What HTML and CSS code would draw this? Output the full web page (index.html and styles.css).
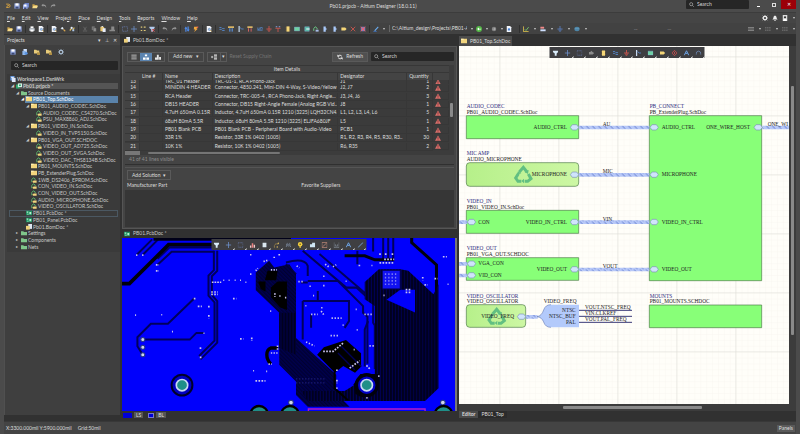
FILE: index.html
```html
<!DOCTYPE html>
<html lang="en">
<head>
    <meta charset="UTF-8">
    <meta name="viewport" content="width=device-width, initial-scale=1.0">
    <title>Pb01.prjpcb - Altium Designer (18.0.11)</title>
    <link rel="stylesheet" href="styles.css">
</head>
<body>
    <!-- icon sprite, every symbol on a 16x16 grid -->
    <svg class="sprite" aria-hidden="true">
        <symbol id="logo" viewBox="0 0 16 16"><path d="M3 3h6a4 4 0 0 1 0 9H4l3-5h4" fill="none" stroke="#d9a441" stroke-width="2.4"/></symbol>
        <symbol id="save" viewBox="0 0 16 16"><path d="M1 1h14v14H1z" fill="#8fa3dc"/><path d="M4 1h8v6H4z" fill="#fff"/><path d="M4 10h8v5H4z" fill="#3d4a75"/></symbol>
        <symbol id="saveall" viewBox="0 0 16 16"><path d="M4 0h12v12H4z" fill="#6d83c8"/><path d="M0 4h12v12H0z" fill="#9db0ea"/><path d="M3 4h6v5H3z" fill="#fff"/><path d="M3 12h6v4H3z" fill="#3d4a75"/></symbol>
        <symbol id="open" viewBox="0 0 16 16"><path d="M1 14V3h5l2 2h6v3" fill="#c9a24b"/><path d="M4 7h12l-3 7H1z" fill="#f6dc8c"/></symbol>
        <symbol id="undo" viewBox="0 0 16 16"><path d="M6 2 1 6l5 4V7q6 0 8 6 0-9-8-9z" fill="#999"/></symbol>
        <symbol id="redo" viewBox="0 0 16 16"><path d="m10 2 5 4-5 4V7q-6 0-8 6 0-9 8-9z" fill="#999"/></symbol>
        <symbol id="print" viewBox="0 0 16 16"><path d="M4 1h8v5H4z" fill="#fff"/><path d="M1 6h14v7H1z" fill="#c4cbd4"/><path d="M4 10h8v5H4z" fill="#fff"/></symbol>
        <symbol id="preview" viewBox="0 0 16 16"><path d="M2 0h9l3 3v13H2z" fill="#f3f5fa"/><circle cx="9" cy="9" r="3" fill="#9cc4ee" stroke="#35568a"/><path d="m11 11 4 4" stroke="#c99b3c" stroke-width="2"/></symbol>
        <symbol id="zoom" viewBox="0 0 16 16"><path d="m8 8 6 6" stroke="#d8a64e" stroke-width="3"/><circle cx="6" cy="6" r="4" fill="#e8f1fb" stroke="#222" stroke-width="1.5"/></symbol>
        <symbol id="zoomsel" viewBox="0 0 16 16"><path d="m2 12 4-4m4 4 4-8" stroke="#e0c064" stroke-width="3"/><circle cx="7" cy="5" r="3" fill="#e8f1fb"/><path d="M9 9h5v5H9z" fill="#a9c7ef"/></symbol>
        <symbol id="cut" viewBox="0 0 16 16"><path d="m4 2 6 9m2-9-6 9" stroke="#777" stroke-width="1.6"/><circle cx="5" cy="13" r="2" fill="none" stroke="#777"/><circle cx="11" cy="13" r="2" fill="none" stroke="#777"/></symbol>
        <symbol id="copy" viewBox="0 0 16 16"><path d="M2 1h8v10H2z" fill="#777"/><path d="M6 5h8v10H6z" fill="#8e8e8e" stroke="#444"/></symbol>
        <symbol id="paste" viewBox="0 0 16 16"><path d="M1 2h10v12H1z" fill="#e7c46c"/><path d="M4 0h4v3H4z" fill="#ddd"/><path d="M7 6h8v10H7z" fill="#e8eefb"/></symbol>
        <symbol id="stamp" viewBox="0 0 16 16"><path d="M6 1h8v9h2v4H1v-4h5z" fill="#8a8a8a"/></symbol>
        <symbol id="rect" viewBox="0 0 16 16"><path d="M1 2h14v12H1z" fill="none" stroke="#6d82b8" stroke-width="1.6" stroke-dasharray="3 1.4"/></symbol>
        <symbol id="plus" viewBox="0 0 16 16"><path d="M8 0v16M0 8h16" stroke="#6f93d0" stroke-width="2"/></symbol>
        <symbol id="dots" viewBox="0 0 16 16"><path d="M2 3h4M2 12h4M10 3h5M10 12h5" stroke="#ddc878" stroke-width="3"/></symbol>
        <symbol id="filter" viewBox="0 0 16 16"><path d="M1 2h14v3l-4 4v6H6V9L1 5z" fill="#d9ecfa"/></symbol>
        <symbol id="nofilter" viewBox="0 0 16 16"><path d="M1 2h14v3l-4 4v6H6V9L1 5z" fill="#b5cdf0"/><path d="m8 8 7 7m0-7-7 7" stroke="#e25252" stroke-width="2.4"/></symbol>
        <symbol id="updown" viewBox="0 0 16 16"><path d="M5 15V5M11 1v10" stroke="#4f8ef0" stroke-width="3"/><path d="m1 7 4-6 4 6zM7 9l4 6 4-6z" fill="#4f8ef0"/></symbol>
        <symbol id="bolt" viewBox="0 0 16 16"><path d="M3 2h11L9 7h4L3 16l3-7H2z" fill="#f0a73e"/><path d="M9 2h6l-3 4z" fill="#e25252"/></symbol>
        <symbol id="wire" viewBox="0 0 16 16"><path d="M1 4h5l3 3h6M1 9h5l3 3h6" fill="none" stroke="#5a93e0" stroke-width="2"/></symbol>
        <symbol id="bus" viewBox="0 0 16 16"><path d="M0 3h16" stroke="#f1c66b" stroke-width="4"/><path d="M4 6v9M8 6v9M12 6v9" stroke="#5a93e0" stroke-width="2"/></symbol>
        <symbol id="entry" viewBox="0 0 16 16"><path d="M3 0v16" stroke="#cfe3fb" stroke-width="3"/><path d="m5 4 5 4h5" fill="none" stroke="#5a93e0" stroke-width="2"/></symbol>
        <symbol id="harness" viewBox="0 0 16 16"><path d="M1 3h14" stroke="#f1c66b" stroke-width="4"/><path d="M4 6v9M11 6v9" stroke="#e06565" stroke-width="2.4"/></symbol>
        <symbol id="net" viewBox="0 0 16 16"><path d="M1 11h14" stroke="#5a93e0" stroke-width="2"/><path d="M2 4v5h4V4m3 5V4h5v5" fill="none" stroke="#5a93e0" stroke-width="1.6"/></symbol>
        <symbol id="gnd" viewBox="0 0 16 16"><path d="M8 0v8M1 8h14M4 11h8M6 14h4" stroke="#e25a50" stroke-width="2"/></symbol>
        <symbol id="gndblue" viewBox="0 0 16 16"><path d="M8 0v8M1 8h14M4 11h8M6 14h4" stroke="#5b84cc" stroke-width="2"/></symbol>
        <symbol id="vcc" viewBox="0 0 16 16"><path d="M2 2h4M10 2h4" stroke="#7fa4e4" stroke-width="3"/><path d="M1 6h14M8 6v10" stroke="#e25a50" stroke-width="2"/></symbol>
        <symbol id="part" viewBox="0 0 16 16"><path d="M4 1h8v14H4z" fill="#f5d678"/><path d="M2 4h2M2 8h2M2 12h2M12 4h2M12 8h2M12 12h2" stroke="#c6953c"/></symbol>
        <symbol id="sheet" viewBox="0 0 16 16"><path d="M1 3h14v10H1z" fill="#6fd3a3" stroke="#8fb9f0"/></symbol>
        <symbol id="sheet2" viewBox="0 0 16 16"><path d="M2 2h12v12H2z" fill="#56b9a0" stroke="#8fb9f0"/><path d="M6 8h9" stroke="#eaf3ff" stroke-width="3"/></symbol>
        <symbol id="reuse" viewBox="0 0 16 16"><path d="M2 13V7l4-5 5 4v3" fill="none" stroke="#6fd38c" stroke-width="2.4"/><path d="M7 10h8v5H7z" fill="#a6bbe6"/></symbol>
        <symbol id="hport" viewBox="0 0 16 16"><path d="M4 1h6v5l4 2-4 2v5H4z" fill="#a9c9fa"/></symbol>
        <symbol id="port" viewBox="0 0 16 16"><path d="M1 4h10l4 4-4 4H1z" fill="#f5d678"/></symbol>
        <symbol id="x" viewBox="0 0 16 16"><path d="m2 2 12 12m0-12L2 14" stroke="#e25a50" stroke-width="2"/></symbol>
        <symbol id="xbox" viewBox="0 0 16 16"><path d="M2 2h12v12H2z" fill="#8a7cb4"/><path d="m2 2 12 12m0-12L2 14" stroke="#f05c6a" stroke-width="2.4"/></symbol>
        <symbol id="pencil" viewBox="0 0 16 16"><path d="M3 12 13 1l2 2L6 13z" fill="#6cb0f5"/><path d="M1 15h9" stroke="#3e78d0" stroke-width="2"/></symbol>
        <symbol id="go" viewBox="0 0 16 16"><circle cx="8" cy="8" r="8" fill="#55b848"/><path d="m3 8 5-4v3h5v2H8v3z" fill="#fff"/></symbol>
        <symbol id="nogo" viewBox="0 0 16 16"><circle cx="8" cy="8" r="6" fill="#808080"/><path d="m13 8-5-4v3H4v2h4v3z" fill="#aaa"/></symbol>
        <symbol id="home" viewBox="0 0 16 16"><path d="M2 0h9l3 3v13H2z" fill="#f3f5fa"/><path d="M5 12V7l3-2 3 2v5z" fill="#4d86d8"/></symbol>
        <symbol id="draw" viewBox="0 0 16 16"><path d="M1 1v14h14" fill="none" stroke="#e0c24d" stroke-width="2.4"/><path d="m5 9 3 3 7-9" fill="none" stroke="#7bc96b" stroke-width="2.4"/></symbol>
        <symbol id="align" viewBox="0 0 16 16"><path d="M1 2h10v5H1z" fill="#e88"/><path d="M1 9h14v5H1z" fill="#cfe0ff"/></symbol>
        <symbol id="blob" viewBox="0 0 16 16"><ellipse cx="8" cy="8" rx="7" ry="6" fill="#4d86a8"/><path d="M2 7h12" stroke="#7fb4d4"/></symbol>
        <symbol id="lines" viewBox="0 0 16 16"><path d="M0 4h16M0 8h16M0 12h16" stroke="#aaa" stroke-width="1.6"/></symbol>
        <symbol id="dashes" viewBox="0 0 16 16"><path d="M0 4h16M0 8h16M0 12h16" stroke="#888" stroke-width="1.4" stroke-dasharray="4 1.5"/></symbol>
        <symbol id="gear" viewBox="0 0 16 16"><circle cx="8" cy="8" r="4.5" fill="none" stroke="currentColor" stroke-width="3"/><path d="M8 0v3M8 13v3M0 8h3M13 8h3M2 2l3 3M11 11l3 3M14 2l-3 3M2 14l3-3" stroke="currentColor" stroke-width="2"/></symbol>
        <symbol id="bell" viewBox="0 0 16 16"><path d="M1 12q3-2 3-6 0-4 4-5 4 1 4 5 0 4 3 6zM6 13h4v2H6z" fill="#eee"/></symbol>
        <symbol id="user" viewBox="0 0 16 16"><path d="M2 0h12v16H2z" fill="#ddd"/><circle cx="8" cy="6" r="3" fill="#333"/><path d="M3 16q0-6 5-6t5 6z" fill="#fff"/></symbol>
        <symbol id="search" viewBox="0 0 16 16"><circle cx="7" cy="7" r="5" fill="none" stroke="#ccc" stroke-width="1.8"/><path d="m11 11 4 4" stroke="#ccc" stroke-width="2"/></symbol>
        <symbol id="compile" viewBox="0 0 16 16"><path d="M4 0h9v12H4z" fill="#cfe0fb"/><path d="M1 5h9v11H1z" fill="#8db6ea"/><circle cx="11" cy="11" r="4" fill="#5a93e0"/></symbol>
        <symbol id="folder" viewBox="0 0 16 16"><path d="M0 3h6l2 2h8v9H0z" fill="#7fc68a"/></symbol>
        <symbol id="folderadd" viewBox="0 0 16 16"><path d="M0 2h6l2 2h6v8H0z" fill="#e8cc7a"/><path d="M8 9h8v7H8z" fill="#b08f45"/></symbol>
        <symbol id="sch" viewBox="0 0 16 16"><path d="M0 2h16v12H0z" fill="#f3d67e"/><path d="M0 2h7v3H0z" fill="#fff1b8"/></symbol>
        <symbol id="device" viewBox="0 0 16 16"><path d="M2 14V7l4-5 5 3v3" fill="none" stroke="#5cb56b" stroke-width="2.4"/><path d="M7 9h8v6H5v-4z" fill="#f3d67e"/></symbol>
        <symbol id="pcb" viewBox="0 0 16 16"><path d="M0 2h16v12H0z" fill="#1f8f60"/><path d="M2 4h4v3H2zM9 5h5v6H9zM3 10h4v2H3z" fill="#b8f0cf"/></symbol>
        <symbol id="bom" viewBox="0 0 16 16"><path d="M6 0h10v13H6z" fill="#dfe6f2"/><path d="M0 5h10v10H0z" fill="#f0d27a"/></symbol>
        <symbol id="wrk" viewBox="0 0 16 16"><path d="M1 0h11v12H1z" fill="#6a9be0"/><path d="M5 5h10v11H5z" fill="#dde8fb"/><path d="M3 3h7v2H3z" fill="#fff"/></symbol>
        <symbol id="prj" viewBox="0 0 16 16"><path d="M0 4h9v11H0z" fill="#2fa56f"/><path d="M5 1h11v10H5z" fill="#d5f2e3"/><path d="M8 4h5v4H8z" fill="#2fa56f"/></symbol>
        <symbol id="list" viewBox="0 0 16 16"><path d="M1 3h14M1 8h14M1 13h14" stroke="#bbb" stroke-width="2.6"/></symbol>
        <symbol id="blocks" viewBox="0 0 16 16"><path d="M5 1h6v5H5zM0 9h7v6H0zM9 9h7v6H9z" fill="#fff"/></symbol>
        <symbol id="hist" viewBox="0 0 16 16"><path d="M0 9h5v6H0zM5 2h5v13H5zM11 8h5v7h-5z" fill="#e6e6e6"/></symbol>
        <symbol id="addlist" viewBox="0 0 16 16"><path d="M0 8h6M3 5v6" stroke="#ddd" stroke-width="2"/><path d="M8 3h8M8 8h8M8 13h8" stroke="#ddd" stroke-width="3"/></symbol>
        <symbol id="refresh" viewBox="0 0 16 16"><path d="M13 6Q8 0 3 5M3 10q5 6 10 1" fill="none" stroke="#eee" stroke-width="2.4"/><path d="M1 1v6h6zM15 15V9H9z" fill="#eee"/></symbol>
        <symbol id="warn" viewBox="0 0 16 16"><path d="m8 1 8 14H0z" fill="#d9706c"/><path d="M8 6v4M8 12v2" stroke="#5a1f1f" stroke-width="2"/></symbol>
        <symbol id="chart" viewBox="0 0 16 16"><path d="M1 9h4v6H1zM11 7h4v8h-4z" fill="#eec9c9"/><path d="M6 3h4v12H6z" fill="#e98080"/></symbol>
        <symbol id="chip" viewBox="0 0 16 16"><path d="M3 2h10v12H3z" fill="#dbe7f0"/><path d="M1 4h2M1 8h2M1 12h2M13 4h2M13 8h2M13 12h2" stroke="#9ab"/></symbol>
        <symbol id="route" viewBox="0 0 16 16"><path d="M2 15V9l4-4h8" fill="none" stroke="#cfa94c" stroke-width="2" stroke-dasharray="4 1"/><circle cx="13" cy="3" r="2" fill="#d8b75e"/><circle cx="10" cy="13" r="2" fill="#d8b75e"/></symbol>
        <symbol id="wave" viewBox="0 0 16 16"><path d="M0 12h3V5q2-3 3 0v5q2 3 3 0V5q2-3 3 0v7h3" fill="none" stroke="#8a9bb4" stroke-width="1.6"/></symbol>
        <symbol id="via" viewBox="0 0 16 16"><circle cx="7" cy="6" r="6" fill="#f2cf3f"/><circle cx="7" cy="6" r="2" fill="#6b5518"/><path d="M7 10v6" stroke="#f2cf3f" stroke-width="3"/></symbol>
        <symbol id="poly" viewBox="0 0 16 16"><path d="M1 14V6h6V2h8v12z" fill="#cfe6f5"/></symbol>
        <symbol id="keepout" viewBox="0 0 16 16"><path d="M1 1h14v14H1zM3 13 13 3" fill="none" stroke="#c58d7c" stroke-width="2"/></symbol>
        <symbol id="dim" viewBox="0 0 16 16"><path d="M1 1v14h14V1M5 6v5h6V6" fill="none" stroke="#8b97a5" stroke-width="1.6"/></symbol>
        <symbol id="line" viewBox="0 0 16 16"><path d="M1 15 15 1" stroke="#7ba7dc" stroke-width="2.4"/></symbol>
        <symbol id="arc" viewBox="0 0 16 16"><path d="M1 13Q1 3 8 3t7 10" fill="none" stroke="#7493c4" stroke-width="2"/></symbol>
        <symbol id="tag" viewBox="0 0 16 16"><path d="M1 5h4l2-3 4 3 4 3-4 4H1z" fill="#8c8c8c"/></symbol>
        <symbol id="info" viewBox="0 0 16 16"><path d="m8 1 7 7-7 7-7-7z" fill="none" stroke="#d95050" stroke-width="2"/><path d="M8 5v6" stroke="#d95050" stroke-width="2"/></symbol>
        <symbol id="letter" viewBox="0 0 16 16"><path d="M2 14 8 2l6 12M5 9h6" fill="none" stroke="#6fa6e6" stroke-width="2.6"/></symbol>
    </svg>

    <div class="app">
        <header class="titlebar">
            <div class="quick" data-icons="logo save saveall open undo redo"></div>
            <h1>Pb01.prjpcb - Altium Designer (18.0.11)</h1>
            <div class="window-tools">
                <label class="search"><svg><use href="#search"/></svg><input type="text" placeholder="Search" aria-label="Search everywhere"></label>
                <button class="win" aria-label="Minimize"><span class="minimize"></span></button>
                <button class="win" aria-label="Maximize"><span class="maximize"></span></button>
                <button class="win close" aria-label="Close">✕</button>
            </div>
        </header>

        <nav class="menubar">
            <a href="#"><u>F</u>ile</a>
            <a href="#"><u>E</u>dit</a>
            <a href="#"><u>V</u>iew</a>
            <a href="#">Proje<u>c</u>t</a>
            <a href="#"><u>P</u>lace</a>
            <a href="#"><u>D</u>esign</a>
            <a href="#"><u>T</u>ools</a>
            <a href="#"><u>R</u>eports</a>
            <a href="#"><u>W</u>indow</a>
            <a href="#"><u>H</u>elp</a>
            <div class="account" data-icons="gear bell user caret"></div>
        </nav>

        <div class="toolbar">
            <div data-icons="open save"></div>
            <div data-icons="print preview"></div>
            <div data-icons="preview zoom zoomsel"></div>
            <div data-icons="cut copy paste stamp"></div>
            <div data-icons="rect plus dots nofilter"></div>
            <div data-icons="undo redo"></div>
            <div data-icons="updown bolt"></div>
            <div data-icons="preview"></div>
            <div class="wiring" data-icons="wire bus entry harness net gnd vcc part sheet sheet2 reuse hport hport port x xbox"></div>
            <div data-icons="pencil caret"></div>
            <input class="path" type="text" value="C:\Altium_design\Projects\PB01-A" aria-label="Document path">
            <div data-icons="caret go caret nogo caret home"></div>
            <div class="drawing" data-icons="draw caret align caret gndblue caret blob caret"></div>
            <span class="more">...</span>
            <span class="more">...</span>
            <div class="line-styles" data-icons="lines caret dashes caret dashes caret"></div>
        </div>

        <main class="workspace">
            <aside class="projects">
                <div class="panel-title"><h2>Projects</h2><span>▾</span><span>⊥</span><span>✕</span></div>
                <div class="panel-body">
                    <div class="panel-tools" data-icons="save compile folderadd folderadd gear"></div>
                    <label class="search"><svg><use href="#search"/></svg><input type="text" placeholder="Search" aria-label="Search projects"></label>
                    <ul class="tree">
                        <li class="l0 strong"><svg><use href="#wrk"/></svg>Workspace1.DsnWrk</li>
                        <li class="l1 strong project"><i>◢</i><svg><use href="#prj"/></svg>Pb01.prjpcb *</li>
                        <li class="l2"><i>◢</i><svg><use href="#folder"/></svg>Source Documents</li>
                        <li class="l3 selected"><i>◢</i><svg><use href="#sch"/></svg>PB01_Top.SchDoc</li>
                        <li class="l4"><i>◢</i><svg><use href="#sch"/></svg>PB01_AUDIO_CODEC.SchDoc</li>
                        <li class="l5"><i></i><svg><use href="#device"/></svg>AUDIO_CODEC_CS4270.SchDoc</li>
                        <li class="l5"><i></i><svg><use href="#device"/></svg>PSU_MAX8860_ADJ.SchDoc</li>
                        <li class="l4"><i>◢</i><svg><use href="#sch"/></svg>PB01_VIDEO_IN.SchDoc</li>
                        <li class="l5"><i></i><svg><use href="#device"/></svg>VIDEO_IN_TVP5150.SchDoc</li>
                        <li class="l4"><i>◢</i><svg><use href="#sch"/></svg>PB01_VGA_OUT.SCHDOC</li>
                        <li class="l5"><i></i><svg><use href="#device"/></svg>VIDEO_OUT_AD725.SchDoc</li>
                        <li class="l5"><i></i><svg><use href="#device"/></svg>VIDEO_OUT_SVGA.SchDoc</li>
                        <li class="l5"><i></i><svg><use href="#device"/></svg>VIDEO_DAC_THS8134B.SchDoc</li>
                        <li class="l4"><i></i><svg><use href="#sch"/></svg>PB01_MOUNTS.SchDoc</li>
                        <li class="l4"><i></i><svg><use href="#sch"/></svg>PB_ExtenderPlug.SchDoc</li>
                        <li class="l4"><i></i><svg><use href="#device"/></svg>1WB_DS2406_EPROM.SchDoc</li>
                        <li class="l4"><i></i><svg><use href="#device"/></svg>CON_VIDEO_IN.SchDoc</li>
                        <li class="l4"><i></i><svg><use href="#device"/></svg>CON_VIDEO_OUT.SchDoc</li>
                        <li class="l4"><i></i><svg><use href="#device"/></svg>AUDIO_MICROPHONE.SchDoc</li>
                        <li class="l4"><i></i><svg><use href="#device"/></svg>VIDEO_OSCILLATOR.SchDoc</li>
                        <li class="l3 focused"><i></i><svg><use href="#pcb"/></svg>PB01.PcbDoc *</li>
                        <li class="l3"><i></i><svg><use href="#pcb"/></svg>PB01_Panel.PcbDoc</li>
                        <li class="l3"><i></i><svg><use href="#bom"/></svg>Pb01.BomDoc *</li>
                        <li class="l2"><i>▸</i><svg><use href="#folder"/></svg>Settings</li>
                        <li class="l2"><i>▸</i><svg><use href="#folder"/></svg>Components</li>
                        <li class="l2"><i>▸</i><svg><use href="#folder"/></svg>Nets</li>
                    </ul>
                </div>
            </aside>

            <div class="documents">
                <section class="bom">
                    <div class="doc-tab"><svg><use href="#bom"/></svg>Pb01.BomDoc *</div>
                    <div class="bom-body">
                        <div class="bom-tools">
                            <div class="segmented">
                                <button aria-label="Flat view"><svg><use href="#list"/></svg></button>
                                <button class="on" aria-label="Consolidated view"><svg><use href="#blocks"/></svg></button>
                                <button aria-label="Totals view"><svg><use href="#hist"/></svg></button>
                            </div>
                            <button class="btn">Add new <span>▾</span></button>
                            <div class="segmented">
                                <button aria-label="Add row"><svg><use href="#addlist"/></svg></button>
                                <button class="narrow" aria-label="More">▾</button>
                            </div>
                            <button class="plain" disabled>Reset Supply Chain</button>
                            <button class="btn refresh"><svg><use href="#refresh"/></svg>Refresh</button>
                            <label class="search"><svg><use href="#search"/></svg><input type="text" placeholder="Search" aria-label="Search items"></label>
                        </div>
                        <div class="items">
                            <table>
                                <caption>Item Details</caption>
                                <thead>
                                    <tr><th></th><th>Line #</th><th>Name</th><th>Description</th><th>Designator</th><th>Quantity</th><th></th></tr>
                                </thead>
                                <tbody>
                                    <tr><td>13</td><td></td><td>TRC_01 Header</td><td>TRC-01-1, RCA Phono-Jack</td><td>J1</td><td>1</td><td><svg><use href="#warn"/></svg></td></tr>
                                    <tr><td>14</td><td></td><td>MINIDIN 4 HEADER</td><td>Connector, 4850.241, Mini-DIN 4-Way, S-Video/Yellow</td><td>J2, J7</td><td>2</td><td><svg><use href="#warn"/></svg></td></tr>
                                    <tr><td>15</td><td></td><td>RCA Header</td><td>Connector, TRC-005-4 , RCA Phono-Jack, Right Angle...</td><td>J3, J4, J6</td><td>3</td><td><svg><use href="#warn"/></svg></td></tr>
                                    <tr><td>16</td><td></td><td>DB15 HEADER</td><td>Connector, DB15 Right-Angle Female (Analog RGB Vid..</td><td>J8</td><td>1</td><td><svg><use href="#warn"/></svg></td></tr>
                                    <tr><td>17</td><td></td><td>4.7uH 650mA 0.15R</td><td>Inductor, 4.7uH 650mA 0.15R 1210 (3225) LQH32CN4..</td><td>L1, L2, L3, L4, L6</td><td>5</td><td><svg><use href="#warn"/></svg></td></tr>
                                    <tr><td>18</td><td></td><td>68uH 80mA 5.5R</td><td>Inductor, 68uH 80mA 5.5R 1210 (3225) ELJFA680JF</td><td>L5</td><td>1</td><td><svg><use href="#warn"/></svg></td></tr>
                                    <tr><td>19</td><td></td><td>PB01 Blank PCB</td><td>PB01 Blank PCB - Peripheral Board with Audio-Video</td><td>PCB1</td><td>1</td><td><svg><use href="#warn"/></svg></td></tr>
                                    <tr><td>20</td><td></td><td>33R 1%</td><td>Resistor, 33R 1% 0402 (1005)</td><td>R1, R2, R3, R4, R5, R30, R3..</td><td>30</td><td><svg><use href="#warn"/></svg></td></tr>
                                    <tr><td>21</td><td></td><td>10K 1%</td><td>Resistor, 10K 1% 0402 (1005)</td><td>R6, R35</td><td>2</td><td><svg><use href="#warn"/></svg></td></tr>
                                </tbody>
                            </table>
                            <div class="vscroll"><span></span></div>
                        </div>
                        <div class="hscroll"><span></span></div>
                        <p class="count">41 of 41 lines visible</p>
                        <div class="solutions">
                            <button class="btn">Add Solution <span>▾</span></button>
                        </div>
                        <table class="suppliers">
                            <thead><tr><th>Manufacturer Part</th><th>Favorite Suppliers</th></tr></thead>
                        </table>
                    </div>
                </section>

                <section class="pcb">
                    <div class="doc-tab"><svg><use href="#pcb"/></svg>PB01.PcbDoc *</div>
                    <div class="canvas">
                        <div class="active-bar" data-icons="filter plus rect chart chip route wave via poly keepout dim letter line"></div>
                        <svg class="board" viewBox="6 42 999 516" preserveAspectRatio="xMinYMin slice" role="img" aria-label="Bottom copper layer">
                            <defs>
                                <pattern id="comb" width="9" height="9" patternUnits="userSpaceOnUse"><path d="M0 0h9v9H0z" fill="#00001e"/><path d="M3 0v9" stroke="#00006a" stroke-width="2"/></pattern>
                                <pattern id="slant" width="8" height="8" patternUnits="userSpaceOnUse" patternTransform="rotate(-45)"><path d="M0 0h8v8H0z" fill="#000030"/><path d="M3 0v8" stroke="#00006c" stroke-width="2"/></pattern>
                            </defs>
                            <path d="M6 42h999v519H6z" fill="#0000fc"/>
                            <g fill="none" stroke="#00005c" stroke-width="6">
                                <path d="M50 92 96 46M68 92l46-46M112 122l42-39h126M112 104l36-34h132"/>
                                <path d="M280 80v58l-16 16v60l18 20v114l-46 46M290 80v60l-16 16v56l16 18v124l-50 50"/>
                                <path d="m222 222-79 76H92l-40 40v27l14 22M68 345h140l20-20h22"/>
                                <path d="M495 120l30 30M545 80l130 110h30l50 45v60l5 8v130M560 170h90l75 75v20l13 12v140"/>
                                <path d="M545 230h138v60l-13 20M545 230v115M590 200v28M570 270v40M540 175h20M595 90l140 120M740 290l-10 25v110"/>
                                <path d="M755 42v40M785 42v65M800 42v65M815 42v65M708 80v40"/>
                                <path d="M495 115q55-15 65 10v30"/>
                            </g>
                            <path d="M6 178h22L145 62h135" fill="none" stroke="#00000e" stroke-width="11"/>
                            <path d="M100 46h410" stroke="#000018" stroke-width="9"/>
                            <path d="M870 42v14l74 66v90M670 95h60l30 12h58" fill="none" stroke="#000010" stroke-width="9"/>
                            <path d="M405 145l40-35 15 20 45-10 20 30v190l120 110v55l40 40H560l-35-35v-40l-50-50V265l-70-67z" fill="url(#slant)"/>
                            <path d="M475 265h50v125l-50-20z" fill="url(#comb)"/>
                            <path d="M412 172h22v30l-14-8zM440 140h30l-4 28h-34zM450 190l20-18h28v85l-20-8-28-30z" fill="#000"/>
                            <path d="M472 370h-22q-12 5-12 20t12 28" fill="none" stroke="#000" stroke-width="10"/>
                            <path d="M730 225v-52l42-38h64l24 5 75 70 15-30v310l-40 38H560l-20-30h130l30-18h60V245z" fill="url(#comb)"/>
                            <path d="M836 196h44v68L795 226z" fill="#0000fc"/>
                            <path d="M782 138h54v56h-54z" fill="#1212f2" stroke="#000050" stroke-width="3"/>
                            <path d="M588 390l20-22 66-22 45 40v40l-18 18-35-20-25 20z" fill="#000"/>
                            <path d="M660 365l60 60M650 385l50 50" stroke="#000058" stroke-width="4"/>
                            <path d="M697 478l20-30h55v28l-16 30q-30 22-55 0z" fill="#000010"/>
                            <path d="M640 440v50l40 36" fill="none" stroke="#000" stroke-width="6"/>
                            <path d="M525 462h90M525 474h90" stroke="#1c1c74" stroke-width="4" stroke-dasharray="4 5"/>
                            <path d="M562 560v-8h348v8" fill="none" stroke="#b41cc8" stroke-width="4"/>
                            <!-- vias -->
                            <g fill="none" stroke="#c9c4ee" stroke-width="5">
                                <path d="M48 93h4M66 93h4M107 122h9M107 140h9M274 174h28M308 168h3M324 168h3M342 168h3M358 168h3M374 174h3" stroke-dasharray="5 3"/>
                                <path d="M272 203h20M272 210h20M220 223h5M232 246h12M265 244v8M265 272v10M337 223h10M45 272h3M123 271h3M155 321h3M249 326h3M240 368v8M238 398h5M358 343h10M393 339v10M397 438h3M436 440h3M404 468h30" stroke-dasharray="5 4"/>
                                <path d="M388 92h5M388 150h5M405 140l6-8M428 112l14-4M460 98v6M475 90v6M450 137h18M462 207v10M475 215h4M492 220h4M448 260h3M450 385h20M443 418h10M470 363v14" stroke-dasharray="4 4"/>
                                <path d="M527 125l8 6M612 120l12 9M635 128l10-6M673 171h3M565 186h4M606 156h4M606 184h4M576 214h3M600 250h6M570 270h20M600 260l10 14M631 281h30M664 302h3M628 333h26M555 352l25 12M703 255h3M706 316h3M729 270h24M744 364h16M714 122v6M750 124h3M553 244h3M532 172h14" stroke-dasharray="4 5"/>
                                <path d="M773 90h6M790 90h6M810 90h6M774 116h45M788 106h30M903 158v10M938 163h10M963 98h12M852 196h18M852 204h18M908 182h10M786 213h3" stroke-dasharray="5 4"/>
                                <path d="M790 150h40M790 160h40M790 170h40M790 180h40" stroke="#7d7df4" stroke-dasharray="4 6"/>
                                <path d="M606 380h30l30-25M685 430l30-22M735 422l10 10M770 454h4M734 518h5M647 434v6M647 465v10M647 488v4M697 375h3M980 180h-3" stroke-dasharray="5 4"/>
                            </g>
                            <g fill="#cfd6ec" stroke="#273a80" stroke-width="3">
                                <circle cx="68" cy="345" r="6"/><circle cx="68" cy="368" r="6"/><circle cx="68" cy="390" r="6"/>
                                <circle cx="510" cy="533" r="7"/><circle cx="963" cy="533" r="7"/>
                            </g>
                            <!-- mounting holes -->
                            <circle cx="185" cy="481" r="31" fill="#0000c0" stroke="#00002a" stroke-width="6"/>
                            <circle cx="736" cy="481" r="31" fill="#0000c8" stroke="#00000c" stroke-width="10"/>
                            <g fill="#1f8f88" stroke="#c8d8f4" stroke-width="5">
                                <circle cx="185" cy="481" r="17"/><circle cx="736" cy="481" r="17"/>
                            </g>
                            <g fill="#1f8f88" stroke="#000" stroke-width="7">
                                <circle cx="415" cy="569" r="26"/><circle cx="507" cy="569" r="26"/><circle cx="965" cy="569" r="26"/>
                            </g>
                        </svg>
                    </div>
                    <div class="layers">
                        <span class="swatch"></span><button>LS</button>
                        <span class="swatch ring"></span><button>BL</button>
                    </div>
                </section>
            </div>

            <section class="schematic">
                <div class="doc-tab active"><svg><use href="#sch"/></svg>PB01_Top.SchDoc</div>
                <div class="sheet-row">
                    <div class="canvas">
                        <div class="active-bar" data-icons="filter plus rect tag part wire gnd entry sheet port info letter arc"></div>
                        <svg class="sheet" viewBox="0 0 990 1074" preserveAspectRatio="xMinYMin slice" role="img" aria-label="Top level schematic">
                            <defs>
                                <pattern id="minor" width="17.7" height="17.7" x="122" y="32" patternUnits="userSpaceOnUse"><path d="M0 0h18M0 0v18" stroke="#f4f3ed" stroke-width="2" fill="none"/></pattern>
                                <pattern id="major" width="177" height="177" x="121" y="31" patternUnits="userSpaceOnUse"><path d="M0 1h177M1 0v177" stroke="#dcdcd6" stroke-width="2" fill="none"/></pattern>
                                <pattern id="cable" width="18" height="12" y="238" patternUnits="userSpaceOnUse"><path d="M0 0h18v12H0z" fill="#b7c8f8"/><path d="m3 1 10 10" stroke="#5f78cc" stroke-width="3"/></pattern>
                                <linearGradient id="reused" x2="1"><stop offset="0" stop-color="#b6f08a"/><stop offset="1" stop-color="#cdf7a4"/></linearGradient>
                                <path id="pin" d="M6-8h13l6 8-6 8H6l-6-8z" fill="#cfe4fb" stroke="#7d93b8" stroke-width="2"/>
                                <g id="recycle" fill="none" stroke="#62bf82" stroke-width="9">
                                    <path d="M-12-8 0-22 11-8M15-2l8 14-10 8H4M-6 20h-10l-7-10 8-13"/>
                                    <path d="m16-14-2 12-10-6zM2 12v14l-8-7zM-20 0l4-10 10 6z" fill="#62bf82" stroke="none"/>
                                </g>
                            </defs>
                            <path d="M0 0h1200v1200H0z" fill="#fffef9"/>
                            <path d="M0 0h1200v1200H0z" fill="url(#minor)"/>
                            <path d="M0 0h1200v1200H0z" fill="url(#major)"/>
                            <g class="block">
                                <path d="M22 209h337v69H22zM22 493h337v69H22zM22 635h337v68H22zM571 209h337v495H571zM571 777h337v68H571z"/>
                                <rect class="reused" x="22" y="350" width="337" height="71" rx="10"/>
                                <rect class="reused" x="22" y="776" width="178" height="68" rx="10"/>
                            </g>
                            <g fill="url(#cable)">
                                <path d="M359 239h212v11H359zM359 381h212v11H359zM359 523h212v11H359zM359 665h212v11H359zM910 239h90v11h-90zM0 523h25v11H0zM0 648h25v11H0zM0 683h25v11H0zM200 807h36v11h-36z"/>
                            </g>
                            <path d="M234 812q14-2 20-20 5-16 22-16h84v68h-84q-17 0-22-16-6-15-20-16z" fill="#b3cafb"/>
                            <path d="M234 812q14-2 20-20 5-16 22-16M276 844q-17 0-22-16-6-15-20-16" fill="none" stroke="#6f83bb" stroke-width="2"/>
                            <path d="M360 793h159M360 811h159M360 829h159" stroke="#3a3a78" stroke-width="3"/>
                            <use href="#recycle" x="193" y="386"/>
                            <use href="#recycle" x="113" y="812"/>
                            <use href="#pin" x="334" y="244"/><use href="#pin" x="334" y="386"/><use href="#pin" x="334" y="528"/><use href="#pin" x="334" y="670"/>
                            <use href="#pin" x="25" y="528"/><use href="#pin" x="25" y="653"/><use href="#pin" x="25" y="688"/><use href="#pin" x="175" y="812"/>
                            <use href="#pin" x="573" y="244"/><use href="#pin" x="573" y="386"/><use href="#pin" x="573" y="528"/><use href="#pin" x="573" y="670"/><use href="#pin" x="885" y="244"/>
                            <g class="name">
                                <text x="23" y="187">AUDIO_CODEC</text><text x="23" y="328">MIC AMP</text><text x="23" y="470">VIDEO_IN</text>
                                <text x="23" y="612">VIDEO_OUT</text><text x="23" y="755">VIDEO_OSCILLATOR</text>
                                <text x="572" y="187">PB_CONNECT</text><text x="572" y="755">MOUNTS</text>
                            </g>
                            <g class="file">
                                <text x="23" y="205">PB01_AUDIO_CODEC.SchDoc</text><text x="23" y="346">AUDIO_MICROPHONE</text><text x="23" y="489">PB01_VIDEO_IN.SchDoc</text>
                                <text x="23" y="630">PB01_VGA_OUT.SCHDOC</text><text x="23" y="772">VIDEO_OSCILLATOR</text>
                                <text x="572" y="205">PB_ExtenderPlug.SchDoc</text><text x="572" y="772">PB01_MOUNTS.SCHDOC</text><text x="254" y="772">VIDEO_FREQ</text>
                                <text x="431" y="240">AU</text><text x="431" y="382">MIC</text><text x="431" y="524">VIN</text><text x="431" y="666">VOUT</text><text x="926" y="240">ONE_WI</text>
                                <text x="378" y="789">VOUT.NTSC_FREQ</text><text x="378" y="807">VIN.CLKREF</text><text x="378" y="825">VOUT.PAL_FREQ</text>
                                <text x="58" y="534">CON</text><text x="58" y="658">VGA_CON</text><text x="58" y="693">VID_CON</text>
                                <text x="608" y="249">AUDIO_CTRL</text><text x="608" y="391">MICROPHONE</text><text x="608" y="533">VIDEO_IN_CTRL</text><text x="608" y="675">VIDEO_OUT</text>
                            </g>
                            <g class="file end">
                                <text x="324" y="249">AUDIO_CTRL</text><text x="324" y="391">MICROPHONE</text><text x="324" y="533">VIDEO_IN_CTRL</text><text x="324" y="675">VIDEO_OUT</text>
                                <text x="165" y="817">VIDEO_FREQ</text><text x="350" y="799">NTSC</text><text x="350" y="816">NTSC_BUF</text><text x="350" y="834">PAL</text>
                                <text x="873" y="249">ONE_WIRE_HOST</text>
                            </g>
                        </svg>
                    </div>
                    <div class="vscroll"><span></span></div>
                </div>
                <div class="hscroll"><span></span></div>
                <div class="view-tabs">
                    <button class="on">Editor</button>
                    <button>PB01_Top</button>
                </div>
            </section>
        </main>

        <footer class="status">
            <span>X:3300.000mil Y:5900.000mil</span>
            <span>Grid:50mil</span>
            <button>Panels</button>
        </footer>
    </div>

    <script>
        // fill every icon strip from its data-icons list
        document.querySelectorAll('[data-icons]').forEach(strip => {
            strip.classList.add('icons');
            strip.dataset.icons.split(' ').forEach(name => {
                const button = document.createElement('button');
                button.setAttribute('aria-label', name);
                if (name === 'caret') {
                    button.className = 'caret';
                } else {
                    button.innerHTML = `<svg><use href="#${name}"/></svg>`;
                }
                strip.appendChild(button);
            });
        });
    </script>
</body>
</html>
```

FILE: styles.css
```css
* {
    box-sizing: border-box;
}
body {
    margin: 0;
    background: #4b4b4b;
    color: #dedede;
    font-family: Lato, "Open Sans", sans-serif;
    font-size: 5px;
    line-height: 7px;
}
h1, h2, p, ul {
    margin: 0;
    padding: 0;
    font-size: inherit;
    font-weight: normal;
}
button, input {
    margin: 0;
    padding: 0;
    border: none;
    background: none;
    color: inherit;
    font: inherit;
}
a {
    color: inherit;
    text-decoration: none;
}
svg {
    display: block;
    width: 6px;
    height: 6px;
    flex: none;
}
.sprite {
    position: absolute;
    width: 0;
    height: 0;
}
.app {
    display: flex;
    flex-direction: column;
    height: 100vh;
    padding: 0 4px;
}

/* icon strips */
.icons {
    display: flex;
    flex: none;
    align-items: center;
    gap: 1px;
}
.icons button {
    display: flex;
    justify-content: center;
    align-items: center;
    width: 8px;
    height: 8px;
}
.icons .caret {
    width: 5px;
}
.caret::before {
    content: "";
    border: 1px solid transparent;
    border-top: 2px solid #ccc;
    border-bottom: none;
}

/* search boxes */
.search {
    display: flex;
    align-items: center;
    gap: 3px;
    height: 9px;
    padding: 0 3px;
    background: #262626;
    border-radius: 1px;
}
.search svg {
    width: 5px;
    height: 5px;
}
.search input {
    flex: 1;
    width: 0;
}
.search input::placeholder {
    color: #d6d6d6;
}

/* title, menu and main toolbar */
.titlebar {
    display: grid;
    grid-template-columns: 1fr auto 1fr;
    align-items: center;
    height: 12px;
}
.titlebar h1 {
    margin-right: 54px;
}
.window-tools {
    display: flex;
    align-items: start;
    justify-content: flex-end;
    height: 12px;
}
.window-tools .search {
    width: 63px;
    margin-right: 2px;
}
.win {
    display: flex;
    align-items: center;
    justify-content: center;
    width: 15px;
    height: 9px;
}
.minimize {
    width: 3px;
    height: 1px;
    margin-top: 3px;
    background: #fff;
}
.maximize {
    width: 4px;
    height: 4px;
    border: 1px solid #ddd;
}
.close {
    background: #9b0008;
    color: #fff;
}
.menubar {
    display: flex;
    align-items: center;
    gap: 7px;
    height: 11px;
    padding-left: 3px;
    background: #454545;
    border-top: 1px solid #3c3c3c;
}
.account {
    margin-left: auto;
    gap: 2px;
    color: #eee;
}
.toolbar {
    display: flex;
    align-items: center;
    gap: 2px;
    height: 11px;
    padding-left: 2px;
    background: #424242;
}
.toolbar .icons + .icons {
    border-left: 1px solid #303030;
    padding-left: 2px;
}
.toolbar .wiring {
    width: 152px;
    justify-content: space-between;
    gap: 0;
}
.path {
    width: 78px;
    margin-left: 1px;
    padding-left: 2px;
    border-left: 1px solid #666;
}
.toolbar .drawing {
    margin-left: 4px;
    gap: 2px;
}
.more {
    margin-left: 44px;
    color: #999;
}
.more + .more {
    margin-left: 28px;
}
.line-styles {
    margin-left: auto;
    gap: 2px;
}

/* projects panel */
.workspace {
    display: flex;
    flex: 1;
    min-height: 0;
    background: #313131;
}
.projects {
    display: flex;
    flex-direction: column;
    width: 116px;
    margin-bottom: 6px;
}
.panel-title {
    display: flex;
    align-items: center;
    gap: 4px;
    height: 11px;
    padding: 0 3px;
    background: #464646;
    border-top: 1px solid #333;
}
.panel-title h2 {
    flex: 1;
}
.panel-body {
    flex: 1;
    padding: 2px 2px 0 4px;
    background: #3f3f3f;
    border-left: 1px solid #505050;
}
.panel-tools {
    gap: 4px;
    height: 10px;
}
.panel-tools svg {
    color: #a9bdd2;
}
.panel-body .search {
    margin: 4px 0 6px 2px;
}
.tree {
    display: grid;
    grid-auto-rows: 1fr;
    height: 174px;
    list-style: none;
    background: #3a3a3a;
    color: #c8c8c8;
    box-shadow: 0 0 0 2px #3a3a3a;
}
.tree li {
    display: flex;
    align-items: center;
    gap: 1px;
    overflow: hidden;
    line-height: 6px;
    white-space: nowrap;
}
.tree i {
    width: 4px;
    font-size: 4px;
    font-style: normal;
}
.strong {
    font-weight: bold;
}
.l0 { padding-left: 1px; }
.l1 { padding-left: 2px; }
.l2 { padding-left: 7px; }
.l3 { padding-left: 12px; }
.l4 { padding-left: 17px; }
.l5 { padding-left: 22px; }
.project {
    background: linear-gradient(90deg, #3a3a3a 10px, #555 10px);
}
.selected {
    background: linear-gradient(90deg, #3a3a3a 16px, #5a83ab 16px);
    color: #fff;
}
.focused {
    box-shadow: inset 0 0 0 1px #4b5862;
}

/* documents */
.documents {
    display: flex;
    flex-direction: column;
    flex: 1;
    min-width: 0;
    padding: 0 2px;
}
.doc-tab {
    display: flex;
    align-items: center;
    gap: 3px;
    align-self: flex-start;
    height: 12px;
    padding: 0 2px;
    color: #c8c8c8;
}
.doc-tab.active {
    height: 10px;
    margin-top: 2px;
    background: #4c4c4c;
    color: #ddd;
}
.bom {
    display: flex;
    flex-direction: column;
}
.bom-body {
    display: flex;
    flex-direction: column;
    padding: 1px 2px;
    border: 1px solid #555;
    background: #444;
}
.bom-tools {
    display: flex;
    align-items: center;
    gap: 3px;
    height: 17px;
    padding: 0 0 0 2px;
}
.segmented {
    display: flex;
    border: 1px solid #5a5a5a;
}
.segmented button {
    display: flex;
    align-items: center;
    justify-content: center;
    width: 12px;
    height: 8px;
}
.segmented .narrow {
    width: 6px;
    border-left: 1px solid #5a5a5a;
}
.segmented .on {
    background: #5b84b0;
}
.btn {
    display: flex;
    align-items: center;
    justify-content: center;
    gap: 3px;
    height: 10px;
    padding: 0 4px;
    border: 1px solid #5a5a5a;
    white-space: nowrap;
}
.plain {
    color: #757575;
}
.refresh {
    margin-left: auto;
    background: #505050;
}
.bom-tools .search {
    width: 83px;
}
.items {
    display: flex;
    background: #3b3b3b;
}
.items table {
    display: flex;
    flex-direction: column;
    flex: 1;
    min-width: 0;
}
.items caption {
    display: block;
    height: 7px;
    background: #444;
    border-top: 1px solid #373737;
    line-height: 6px;
}
.items thead, .items tbody {
    display: grid;
}
.items thead {
    height: 8px;
    background: #444;
    border-top: 1px solid #373737;
}
.items tbody {
    height: 71px;
    grid-template-rows: 4px repeat(8, 1fr);
    overflow: hidden;
}
.items tr {
    display: grid;
    grid-template-columns: 15fr 23fr 50fr 126fr 69fr 26fr 16fr;
    align-items: center;
    overflow: hidden;
}
.items tbody tr:first-child {
    align-content: end;
}
.items td, .items th {
    padding: 0 0 0 2px;
    border-right: 1px solid #373737;
    font-weight: normal;
    text-align: left;
    white-space: nowrap;
    overflow: hidden;
}
.items td {
    border-bottom: 1px solid #373737;
}
.items td:first-child {
    padding-right: 3px;
    background: #434343;
    text-align: right;
}
.items td:nth-child(6) {
    padding-right: 3px;
    text-align: right;
}
.items td:empty::before {
    content: "\00a0";
}
.vscroll {
    display: flex;
    width: 5px;
    padding: 0 1px;
    background: #3c3c3c;
}
.vscroll span {
    width: 3px;
    border-radius: 1px;
    background: #8a8a8a;
}
.items .vscroll span {
    height: 14px;
    margin-top: 38px;
}
.hscroll {
    height: 5px;
    padding: 1px 0;
    background: #3c3c3c;
}
.hscroll span {
    display: block;
    height: 2px;
    border-radius: 1px;
    background: #757575;
}
.bom .hscroll {
    height: 4px;
    border-left: 15px solid #777;
}
.bom .hscroll span {
    width: 42%;
    margin-left: 8px;
}
.count {
    height: 10px;
    padding: 1px 4px;
    color: #8d8d8d;
    border-bottom: 1px solid #303030;
}
.solutions {
    display: flex;
    align-items: center;
    height: 15px;
    margin-top: 2px;
    padding-left: 2px;
    border-top: 1px solid #555;
}
.suppliers {
    height: 45px;
    border-spacing: 0;
    background: linear-gradient(#444 8px, #363636 8px);
}
.suppliers thead {
    vertical-align: top;
}
.suppliers th {
    width: 53%;
    padding: 0 0 0 2px;
    font-weight: normal;
    text-align: left;
}
.suppliers th + th {
    width: 47%;
}

/* board view */
.pcb {
    display: flex;
    flex-direction: column;
    flex: 1;
    min-height: 0;
}
.pcb .doc-tab {
    height: 9px;
}
.canvas {
    position: relative;
    flex: 1;
    min-width: 0;
    min-height: 0;
    overflow: hidden;
}
.pcb .canvas {
    border-right: 2px solid #777;
}
.board, .sheet {
    position: absolute;
    width: 100%;
    height: 100%;
}
.active-bar {
    position: absolute;
    top: 1px;
    left: 50%;
    z-index: 1;
    width: 155px;
    height: 11px;
    gap: 0;
    transform: translateX(-50%);
    background: #3f3f42;
}
.schematic .active-bar {
    margin-left: 3px;
}
.active-bar button {
    flex: 1;
    height: 11px;
}
.active-bar button + button {
    background: linear-gradient(135deg, transparent 50%, #ccc 50%) 100% 100% / 2px 2px no-repeat;
}
.layers {
    display: flex;
    align-items: center;
    gap: 2px;
    height: 8px;
    padding-left: 1px;
    margin-bottom: 2px;
}
.layers button {
    height: 6px;
    padding: 0 2px;
    background: #555;
    line-height: 6px;
}
.swatch {
    width: 9px;
    height: 5px;
    background: #0000d8;
}
.ring {
    width: 6px;
    margin-left: 3px;
    border: 1px solid #77c;
}

/* schematic view */
.schematic {
    display: flex;
    flex-direction: column;
    width: 337px;
    flex: none;
}
.sheet-row {
    display: flex;
    flex: 1;
    min-height: 0;
}
.sheet-row .vscroll {
    width: 7px;
    padding: 0 2px;
}
.sheet-row .vscroll span {
    height: 249px;
    margin-top: 40px;
}
.schematic .hscroll {
    height: 7px;
    padding: 2px 0;
}
.schematic .hscroll span {
    width: 139px;
    height: 3px;
    margin-left: 104px;
    background: #8a8a8a;
}
.block {
    fill: #88ff78;
    stroke: #4d7a48;
    stroke-width: 2;
}
.reused {
    fill: url(#reused);
}
.sheet text {
    font-family: "Liberation Serif", serif;
    font-size: 16px;
}
.name {
    fill: #2c2c80;
}
.file {
    fill: #222;
}
.end {
    text-anchor: end;
}
.view-tabs {
    display: flex;
    height: 8px;
    margin-bottom: 2px;
}
.view-tabs button {
    height: 7px;
    padding: 0 3px;
    background: #2b2b2b;
}
.view-tabs .on {
    background: #4a4a4a;
    font-weight: bold;
}
.status {
    display: flex;
    align-items: center;
    gap: 6px;
    height: 13px;
    padding: 0 1px 0 2px;
    background: #444;
    border-top: 1px solid #383838;
}
.status button {
    height: 7px;
    margin-left: auto;
    padding: 0 2px;
    background: #5a5a5a;
    line-height: 7px;
}
```
